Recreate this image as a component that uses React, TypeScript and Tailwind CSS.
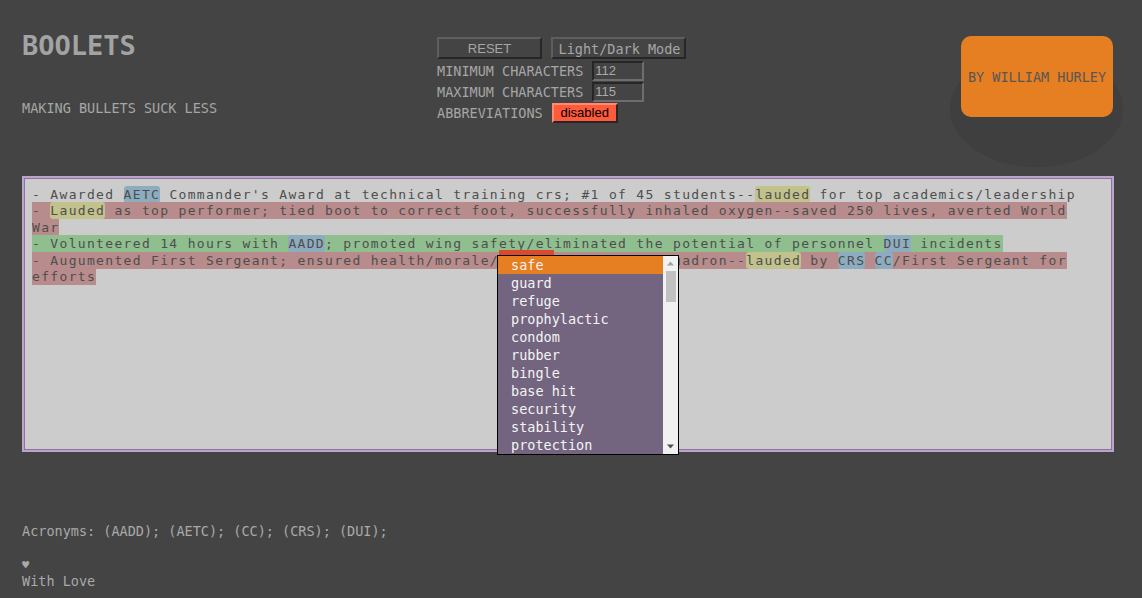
import React from "react";

const mono = "font-['DejaVu_Sans_Mono',monospace]";
const sans = "font-['Liberation_Sans',Arial,sans-serif]";

type Seg = { t: string; c?: "acr" | "lau" | "sel" };

const bullets: { bg?: string; segs: Seg[] }[] = [
  {
    segs: [
      { t: "- Awarded " },
      { t: "AETC", c: "acr" },
      { t: " Commander's Award at technical training crs; #1 of 45 students--" },
      { t: "lauded", c: "lau" },
      { t: " for top academics/leadership" },
    ],
  },
  {
    bg: "bg-[#b88c8c]",
    segs: [
      { t: "- " },
      { t: "Lauded", c: "lau" },
      { t: " as top performer; tied boot to correct foot, successfully inhaled oxygen--saved 250 lives, averted World War" },
    ],
  },
  {
    bg: "bg-[#8fbf8f]",
    segs: [
      { t: "- Volunteered 14 hours with " },
      { t: "AADD", c: "acr" },
      { t: "; promoted wing safety/eliminated the potential of personnel " },
      { t: "DUI", c: "acr" },
      { t: " incidents" },
    ],
  },
  {
    bg: "bg-[#b88c8c]",
    segs: [
      { t: "- Augumented First Sergeant; ensured health/morale/" },
      { t: "safety", c: "sel" },
      { t: " of entire squadron--" },
      { t: "lauded", c: "lau" },
      { t: " by " },
      { t: "CRS", c: "acr" },
      { t: " " },
      { t: "CC", c: "acr" },
      { t: "/First Sergeant for efforts" },
    ],
  },
];

const synonyms = [
  "safe",
  "guard",
  "refuge",
  "prophylactic",
  "condom",
  "rubber",
  "bingle",
  "base hit",
  "security",
  "stability",
  "protection",
];

function segClass(c?: Seg["c"]) {
  if (c === "acr") return "bg-[#8eacbf] rounded-[3px] py-[1px]";
  if (c === "lau") return "bg-[#c2c28c] rounded-[3px] py-[1px]";
  if (c === "sel") return "bg-[#dc4a2e] pt-[3px] pb-[1px]";
  return "";
}

function Dropdown() {
  return (
    <div className="absolute left-[473px] top-[77px] w-[182px] h-[200px] border border-black bg-[#736580] flex">
      <ul className="flex-1 overflow-hidden">
        {synonyms.map((s, i) => (
          <li
            key={s}
            className={`h-[18px] leading-[18px] pl-[13px] text-[13.5px] text-[#f4f4f4] ${mono} ${
              i === 0 ? "bg-[#e67e22]" : ""
            }`}
          >
            {s}
          </li>
        ))}
      </ul>
      {/* scrollbar */}
      <div className="w-[15px] bg-[#f1f1f1] flex flex-col items-center">
        <svg width="15" height="15" viewBox="0 0 15 15">
          <path d="M4 9.5 L7.5 5.5 L11 9.5 Z" fill="#a3a3a3" />
        </svg>
        <div className="w-[10px] h-[31px] bg-[#c1c1c1]" />
        <div className="flex-1" />
        <svg width="15" height="15" viewBox="0 0 15 15">
          <path d="M4 5.5 L7.5 9.5 L11 5.5 Z" fill="#505050" />
        </svg>
      </div>
    </div>
  );
}

export default function App() {
  return (
    <div className="min-h-screen w-full bg-[#444444] text-[#a6a6a6]">
      {/* Header */}
      <header className="flex items-start h-[176px] pl-[22px] pr-[29px] pt-[30px]">
        <div className="w-[415px]">
          <h1 className={`text-[27px] leading-[32px] font-bold text-[#a3a3a3] ${mono}`}>BOOLETS</h1>
          <p className={`mt-[38px] text-[13.5px] leading-[16px] ${mono}`}>MAKING BULLETS SUCK LESS</p>
        </div>

        <div className={`mt-[7px] flex flex-col text-[13.5px] ${mono}`}>
          <div className="flex gap-[9px]">
            <button
              className={`w-[105px] h-[22px] bg-[#444] border-2 border-t-[#5e5e5e] border-l-[#5e5e5e] border-b-[#262626] border-r-[#262626] text-[13px] text-[#a6a6a6] ${sans}`}
            >
              RESET
            </button>
            <button className="w-[135px] h-[22px] bg-[#444] border-2 border-t-[#5e5e5e] border-l-[#5e5e5e] border-b-[#262626] border-r-[#262626] pl-[2px] text-[#a6a6a6]">
              Light/Dark Mode
            </button>
          </div>
          <div className="flex items-center gap-[9px] mt-[2px] h-[20px]">
            <span>MINIMUM CHARACTERS</span>
            <div
              className={`w-[52px] h-[20px] border-2 border-t-[#262626] border-l-[#262626] border-b-[#6e6e6e] border-r-[#6e6e6e] pl-[1px] text-[13px] leading-[16px] text-[#a9a9a9] ${sans}`}
            >
              112
            </div>
          </div>
          <div className="flex items-center gap-[9px] mt-[1px] h-[20px]">
            <span>MAXIMUM CHARACTERS</span>
            <div
              className={`w-[52px] h-[20px] border-2 border-t-[#262626] border-l-[#262626] border-b-[#6e6e6e] border-r-[#6e6e6e] pl-[1px] text-[13px] leading-[16px] text-[#a9a9a9] ${sans}`}
            >
              115
            </div>
          </div>
          <div className="flex items-center gap-[9px] mt-[1px] h-[20px]">
            <span>ABBREVIATIONS</span>
            <button
              className={`w-[66px] h-[20px] bg-[#ff5a3c] border-2 border-t-[#ff8a70] border-l-[#ff8a70] border-b-[#262626] border-r-[#262626] text-[13px] leading-[16px] text-black ${sans}`}
            >
              disabled
            </button>
          </div>
        </div>

        <div className="ml-auto mt-[6px] relative">
          <div className="absolute left-[-11px] top-[14px] w-[173px] h-[117px] rounded-[50%] bg-[#3f3f3f]" />
          <div
            className={`relative w-[152px] h-[81px] rounded-[10px] bg-[#e67e22] flex items-center justify-center pt-[1px] text-[13.5px] text-[#575757] ${mono}`}
          >
            BY WILLIAM HURLEY
          </div>
        </div>
      </header>

      {/* Bullet editor */}
      <div className="relative ml-[22px] w-[1092px] h-[276px] border-2 border-[#bca2cf]">
        <div className="h-full border border-[#8a7498] bg-[#cccccc] pl-[7px] pr-[20px] pt-[8px]">
          <div className={`text-[13px] leading-[16.4px] tracking-[1.33px] text-[#4e4e4e] ${mono}`}>
            {bullets.map((b, i) => (
              <div key={i}>
                <span className={`${b.bg ?? ""} py-[1px]`}>
                  {b.segs.map((s, j) => (
                    <span key={j} className={segClass(s.c)}>
                      {s.t}
                    </span>
                  ))}
                </span>
              </div>
            ))}
          </div>
        </div>
        <Dropdown />
      </div>

      {/* Footer */}
      <footer className={`pl-[22px] mt-[71px] text-[13.5px] leading-[16px] text-[#a9a9a9] ${mono}`}>
        <p>Acronyms: (AADD); (AETC); (CC); (CRS); (DUI);</p>
        <p className="mt-[18px] text-[12px]">♥</p>
        <p>With Love</p>
      </footer>
    </div>
  );
}
